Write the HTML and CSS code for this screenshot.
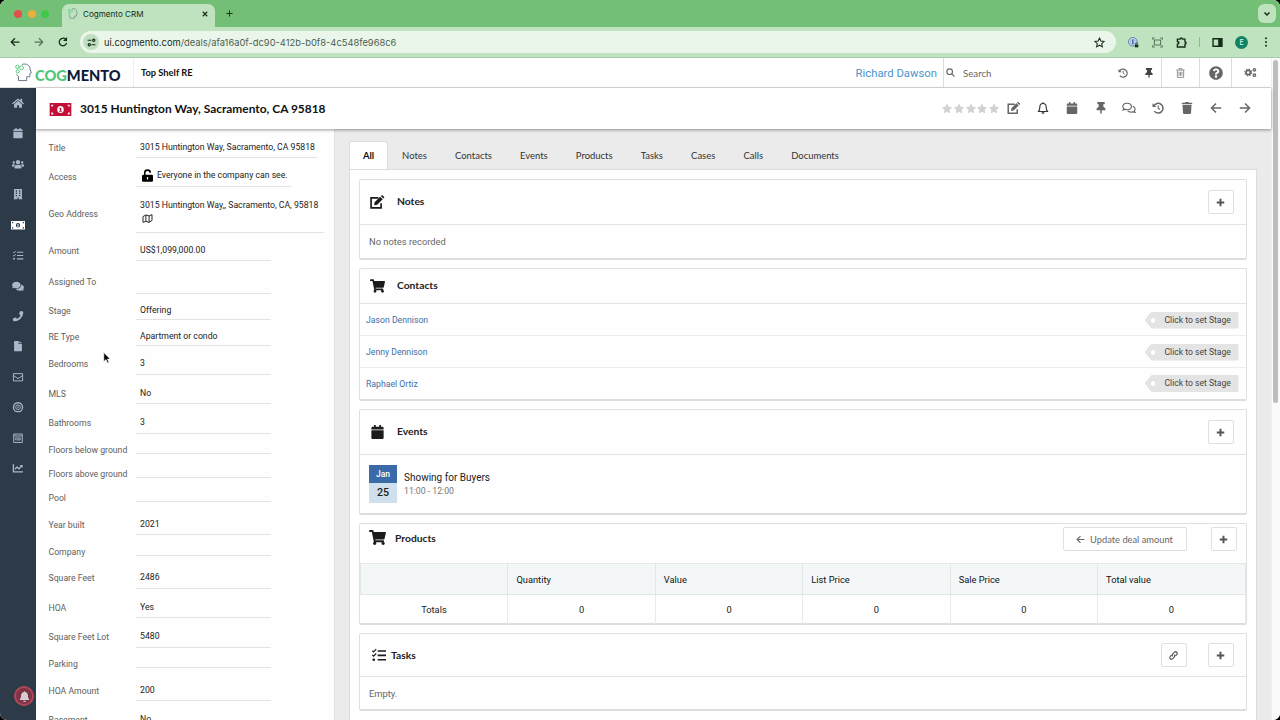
FILE: index.html
```html
<!DOCTYPE html>
<html lang="en">

<head>
    <meta charset="utf-8">
    <title>Cogmento CRM</title>
    <link rel="stylesheet" href="styles.css">
</head>

<body>
    <!-- icon set -->
    <svg class="sprite">
        <symbol id="home" viewBox="0 0 576 512"><path d="M280.37 148.26L96 300.11V464a16 16 0 0 0 16 16l112.06-.29a16 16 0 0 0 15.92-16V368a16 16 0 0 1 16-16h64a16 16 0 0 1 16 16v95.64a16 16 0 0 0 16 16.05L464 480a16 16 0 0 0 16-16V300L295.67 148.26a12.19 12.19 0 0 0-15.3 0zM571.6 251.47L488 182.56V44.05a12 12 0 0 0-12-12h-56a12 12 0 0 0-12 12v72.61L318.47 43a48 48 0 0 0-61 0L4.34 251.47a12 12 0 0 0-1.6 16.9l25.5 31A12 12 0 0 0 45.15 301l235.22-193.74a12.19 12.19 0 0 1 15.3 0L530.9 301a12 12 0 0 0 16.9-1.6l25.5-31a12 12 0 0 0-1.7-16.93z"/></symbol>
        <symbol id="calendar" viewBox="0 0 448 512"><path d="M12 192h424c6.600 0 12 5.400 12 12v260c0 26.500-21.500 48-48 48H48c-26.500 0-48-21.500-48-48V204c0-6.600 5.400-12 12-12zm436-44v-36c0-26.500-21.500-48-48-48h-48V12c0-6.600-5.400-12-12-12h-40c-6.600 0-12 5.400-12 12v52H160V12c0-6.600-5.400-12-12-12h-40c-6.600 0-12 5.400-12 12v52H48C21.500 64 0 85.500 0 112v36c0 6.600 5.400 12 12 12h424c6.600 0 12-5.400 12-12z"/></symbol>
        <symbol id="users" viewBox="0 0 640 512"><path d="M96 224c35.300 0 64-28.700 64-64s-28.700-64-64-64-64 28.700-64 64 28.700 64 64 64zm448 0c35.300 0 64-28.700 64-64s-28.700-64-64-64-64 28.700-64 64 28.700 64 64 64zm32 32h-64c-17.600 0-33.500 7.100-45.100 18.600 40.300 22.100 68.900 62 75.100 109.400h66c17.700 0 32-14.300 32-32v-32c0-35.300-28.700-64-64-64zm-256 0c61.900 0 112-50.100 112-112S381.900 32 320 32 208 82.100 208 144s50.100 112 112 112zm76.800 32h-8.300c-20.800 10-43.900 16-68.500 16s-47.600-6-68.500-16h-8.300C179.600 288 128 339.600 128 403.200V432c0 26.500 21.500 48 48 48h288c26.500 0 48-21.500 48-48v-28.800c0-63.600-51.600-115.200-115.200-115.200zm-223.700-13.400C161.500 263.100 145.600 256 128 256H64c-35.300 0-64 28.700-64 64v32c0 17.700 14.300 32 32 32h65.900c6.300-47.400 34.900-87.300 75.200-109.400z"/></symbol>
        <symbol id="building" viewBox="0 0 14 16"><path fill-rule="evenodd" d="M1 0h12v15h1v1H8v-3H6v3H0v-1h1zM3.500 2v2h2V2zm5 0v2h2V2zm-5 3.500v2h2v-2zm5 0v2h2v-2zm-5 3.500v2h2V9zm5 0v2h2V9z"/></symbol>
        <symbol id="money" viewBox="0 0 20 12"><path fill-rule="evenodd" d="M0 0h20v12H0zM1.500 1.500v2a2 2 0 0 0 2-2zm15 0a2 2 0 0 0 2 2v-2zm-15 9h2a2 2 0 0 0-2-2zm15 0h2v-2a2 2 0 0 0-2 2zM10 2.700a3 3.300 0 1 0 0 6.600 3 3.300 0 0 0 0-6.600z"/><path d="M9.200 4.300h1.500v3h.6v.8H8.700v-.8h.7V5.200h-.6z"/></symbol>
        <symbol id="tasks" viewBox="0 0 16 16"><path d="M6.500 2.500H16v1.800H6.500zm0 5H16v1.800H6.500zm0 5H16v1.800H6.500z"/><circle cx="2" cy="13.400" r="1.500"/><path fill="none" stroke="currentColor" stroke-width="1.400" d="M.4 3l1.400 1.400L4.800 1.300M.4 8l1.400 1.400L4.800 6.300"/></symbol>
        <symbol id="comments" viewBox="0 0 576 512"><path d="M416 192c0-88.400-93.100-160-208-160S0 103.600 0 192c0 34.300 14.100 65.900 38 92-13.400 30.200-35.500 54.200-35.800 54.500-2.200 2.300-2.800 5.700-1.500 8.700S4.800 352 8 352c36.600 0 66.900-12.300 88.700-25 32.200 15.700 70.300 25 111.300 25 114.900 0 208-71.600 208-160zm122 220c23.900-26 38-57.700 38-92 0-66.900-53.500-124.200-129.300-148.100.9 6.600 1.300 13.300 1.300 20.100 0 105.900-107.700 192-240 192-10.800 0-21.300-.8-31.700-1.900C207.800 439.600 281.800 480 368 480c41 0 79.100-9.200 111.300-25 21.800 12.700 52.100 25 88.700 25 3.200 0 6.100-1.900 7.300-4.800 1.300-2.900.7-6.300-1.500-8.700-.3-.3-22.400-24.200-35.800-54.500z"/></symbol>
        <symbol id="comments-o" viewBox="0 0 18 16"><path class="line thick" d="M6.500 1.700c3.200 0 5.700 1.900 5.700 4.300s-2.500 4.300-5.700 4.300c-1 0-2-.2-2.800-.6-.8.500-1.600.8-2.600.9.500-.6.800-1.200 1-1.900C1.300 8 .8 7 .8 6c0-2.400 2.500-4.300 5.700-4.300zM14 5.600c1.900.6 3.200 2 3.200 3.700 0 1-.4 1.900-1.200 2.600.2.700.6 1.300 1 1.900-1 0-1.900-.4-2.700-.9-.8.400-1.700.6-2.700.6-1.800 0-3.400-.6-4.400-1.600"/></symbol>
        <symbol id="phone" viewBox="0 0 512 512"><path d="M493.400 24.600l-104-24c-11.300-2.600-22.900 3.300-27.500 13.900l-48 112c-4.200 9.800-1.400 21.300 6.900 28l60.600 49.600c-36 76.700-98.900 140.500-177.200 177.200l-49.600-60.600c-6.800-8.300-18.200-11.100-28-6.900l-112 48C3.900 366.500-2 378.100.6 389.400l24 104C27.100 504.200 36.700 512 48 512c256.100 0 464-207.500 464-464 0-11.200-7.700-20.900-18.600-23.400z"/></symbol>
        <symbol id="file" viewBox="0 0 12 16"><path d="M1 0h6v4.500h5V15a1 1 0 0 1-1 1H1a1 1 0 0 1-1-1V1a1 1 0 0 1 1-1zm7 0l4 3.500H8z"/></symbol>
        <symbol id="mail" viewBox="0 0 16 16"><path class="line thick" d="M1 2.500h14v11H1zM1 5.500L8 10l7-4.500"/></symbol>
        <symbol id="target" viewBox="0 0 16 16"><circle class="line heavy" cx="8" cy="8" r="6.900"/><circle class="line thick" cx="8" cy="8" r="3.500"/><circle cx="8" cy="8" r="1.200"/></symbol>
        <symbol id="form" viewBox="0 0 16 16"><path class="line thick" d="M1.500 1.500h13v13h-13zM2 4.500h12"/><path class="line" d="M4 7.500h8v3H4zM6.700 7v3M9.500 7v5"/></symbol>
        <symbol id="chart" viewBox="0 0 16 16"><path class="line heavy" d="M1 2v11.500h14.500M3.500 9.500L6.500 6l3 3 4-4.500"/><path d="M10.500 3H15v4.500z"/></symbol>
        <symbol id="bell" viewBox="0 0 16 16"><path d="M8 .5a1 1 0 0 1 1 1c2.400.5 4 2.400 4 5 0 3.300.8 4.200 1.600 5.200.5.700.1 1.500-.7 1.500H2.100c-.8 0-1.200-.8-.7-1.500C2.200 10.700 3 9.800 3 6.500c0-2.600 1.600-4.500 4-5a1 1 0 0 1 1-1zM6 14h4a2 2 0 0 1-4 0z"/></symbol>
        <symbol id="bell-o" viewBox="0 0 16 16"><path class="line thick" d="M8 2c2.600 0 4.200 2 4.200 4.500 0 3.400.7 4.700 1.800 6.200H2c1.100-1.500 1.800-2.800 1.800-6.200C3.800 4 5.400 2 8 2z"/><path d="M7.200.3h1.600V2H7.200zM6 13.500h4a2 2 0 0 1-4 0z"/></symbol>
        <symbol id="edit" viewBox="0 0 18 16"><path class="line heavy" d="M10 3H1.300v12h12V9.500"/><path d="M5.500 8.300l6.700-6.700 3.100 3.100-6.700 6.700-3.600.6zM13 .9l.7-.6a1 1 0 0 1 1.500 0L16.700 1.800a1 1 0 0 1 0 1.500l-.7.6z"/></symbol>
        <symbol id="pin" viewBox="0 0 384 512"><path d="M298 214L286 96h42c13 0 24-11 24-24V24c0-13-11-24-24-24H56C43 0 32 11 32 24v48c0 13 11 24 24 24h42L86 214C37 237 0 277 0 328c0 13 11 24 24 24h136v104l25 52c3 6 11 6 14 0l25-52V352h136c13 0 24-11 24-24 0-51-38-91-86-114z"/></symbol>
        <symbol id="history" viewBox="0 0 16 16"><path class="line heavy" d="M2.500 5A6.500 6.500 0 1 1 3 12.200"/><path class="line thick" d="M8.300 4.500V8.300l2.300 1.700"/><path d="M.7 1.500v5.200h5.200z"/></symbol>
        <symbol id="trash" viewBox="0 0 448 512"><path d="M432 32H312l-9.400-18.700A24 24 0 0 0 281.100 0H166.800a23.720 23.720 0 0 0-21.400 13.300L136 32H16A16 16 0 0 0 0 48v32a16 16 0 0 0 16 16h416a16 16 0 0 0 16-16V48a16 16 0 0 0-16-16zM53.200 467a48 48 0 0 0 47.900 45h245.800a48 48 0 0 0 47.900-45L416 128H32z"/></symbol>
        <symbol id="trash-o" viewBox="0 0 14 16"><path class="line" d="M.5 3.300h13M4.500 3V1h5v2M2 3.500V15h10V3.500M4.700 6v6.500M7 6v6.500M9.300 6v6.500"/></symbol>
        <symbol id="left" viewBox="0 0 16 16"><path class="line heavy" d="M15 8H2.500M8 2L2 8l6 6"/></symbol>
        <symbol id="right" viewBox="0 0 16 16"><path class="line heavy" d="M1 8h12.500M8 2l6 6-6 6"/></symbol>
        <symbol id="cart" viewBox="0 0 576 512"><path d="M528.120 301.319l47.273-208C578.806 78.301 567.391 64 551.990 64H159.208l-9.166-44.810C147.758 8.021 137.930 0 126.529 0H24C10.745 0 0 10.745 0 24v16c0 13.255 10.745 24 24 24h69.883l70.248 343.435C147.325 417.100 136 435.222 136 456c0 30.928 25.072 56 56 56s56-25.072 56-56c0-15.674-6.447-29.835-16.824-40h209.647C430.447 426.165 424 440.326 424 456c0 30.928 25.072 56 56 56s56-25.072 56-56c0-22.172-12.888-41.332-31.579-50.405l5.517-24.276c3.413-15.018-8.002-29.319-23.403-29.319H218.117l-6.545-32h293.145c11.206 0 20.920-7.754 23.403-18.681z"/></symbol>
        <symbol id="star" viewBox="0 0 576 512"><path d="M259.300 17.800L194 150.200 47.900 171.500c-26.200 3.800-36.700 36.100-17.700 54.600l105.700 103-25 145.500c-4.500 26.300 23.200 46 46.400 33.700L288 439.600l130.700 68.700c23.200 12.200 50.900-7.400 46.400-33.700l-25-145.500 105.700-103c19-18.500 8.500-50.800-17.700-54.600L382 150.200 316.700 17.800c-11.700-23.600-45.600-23.900-57.400 0z"/></symbol>
        <symbol id="star-o" viewBox="0 0 16 16"><path class="line thick" d="M8 1.500l2 4.400 4.800.5-3.600 3.200 1 4.700L8 11.900l-4.200 2.400 1-4.700L1.200 6.400 6 5.900z"/></symbol>
        <symbol id="help" viewBox="0 0 512 512"><path d="M504 256c0 136.997-111.043 248-248 248S8 392.997 8 256C8 119.083 119.043 8 256 8s248 111.083 248 248zM262.655 90c-54.497 0-89.255 22.957-116.549 63.758-3.536 5.286-2.353 12.415 2.715 16.258l34.699 26.310c5.205 3.947 12.621 3.008 16.665-2.122 17.864-22.658 30.113-35.797 57.303-35.797 20.429 0 45.698 13.148 45.698 32.958 0 14.976-12.363 22.667-32.534 33.976C247.128 238.528 216 254.941 216 296v4c0 6.627 5.373 12 12 12h56c6.627 0 12-5.373 12-12v-1.333c0-28.462 83.186-29.647 83.186-106.667 0-58.002-60.165-102-116.531-102zM256 338c-25.365 0-46 20.635-46 46 0 25.364 20.635 46 46 46s46-20.636 46-46c0-25.365-20.635-46-46-46z"/></symbol>
        <symbol id="cogs" viewBox="0 0 20 16"><circle cx="6.500" cy="8" r="3.300" fill="none" stroke="currentColor" stroke-width="2.600"/><circle cx="6.500" cy="8" r="5.200" fill="none" stroke="currentColor" stroke-width="1.800" stroke-dasharray="2.300 1.780"/><circle class="line heavy" cx="16" cy="3.800" r="1.900"/><circle class="line heavy" cx="16" cy="12.200" r="1.900"/></symbol>
        <symbol id="search" viewBox="0 0 16 16"><circle class="line heavy" cx="6.500" cy="6.500" r="5"/><path class="line heavy" d="M10.200 10.200l5 5"/></symbol>
        <symbol id="lock-open" viewBox="0 0 14 16"><path class="line heavy" d="M3.500 8V4.600C3.500 2.500 5 1.200 7 1.200s3.500 1.300 3.500 3.400"/><path fill-rule="evenodd" d="M1.500 7h11A1.500 1.500 0 0 1 14 8.500v6a1.500 1.500 0 0 1-1.500 1.500h-11A1.500 1.500 0 0 1 0 14.500v-6A1.500 1.500 0 0 1 1.500 7zm4.700 2.800v3.400h1.600V9.800z"/></symbol>
        <symbol id="map" viewBox="0 0 16 14"><path class="line thick" d="M1 4l4.500-2.500 5 1.500L15 1v9l-4.500 3-5-1.500L1 13zM5.500 1.500v10M10.500 3v10"/></symbol>
        <symbol id="plus" viewBox="0 0 12 12"><path d="M4.700 1h2.600v3.700H11v2.600H7.300V11H4.700V7.300H1V4.700h3.700z"/></symbol>
        <symbol id="link" viewBox="0 0 16 16"><path class="line heavy" d="M6.700 9.500a3 3 0 0 1 0-4.200l2.700-3a3 3 0 0 1 4.300 4.200l-2 2.100M9.300 6.500a3 3 0 0 1 0 4.200l-2.700 3a3 3 0 0 1-4.300-4.200l2-2.100"/></symbol>
        <symbol id="reload" viewBox="0 0 16 16"><path class="line heavy" d="M13.800 9.500A6 6 0 1 1 12.200 3.700"/><path d="M14.500 0v6.500H8z"/></symbol>
        <symbol id="tune" viewBox="0 0 16 16"><path class="line heavy" d="M1 4h7M8 12h7"/><circle class="line heavy" cx="12" cy="4" r="2"/><circle class="line heavy" cx="4" cy="12" r="2"/></symbol>
        <symbol id="capture" viewBox="0 0 16 16"><path class="line thick" d="M3.500 4.500h9v7h-9zM1 4V1.500h3M12 1.500h3V4M1 12v2.500h3M12 14.500h3V12"/></symbol>
        <symbol id="puzzle" viewBox="0 0 16 16"><path class="line heavy" d="M2 3h4a1.700 1.700 0 0 1 3.400 0H13v4a1.700 1.700 0 0 1 0 3.400V14.500H2v-4c3 0 3-4 0-4z"/></symbol>
        <symbol id="panel" viewBox="0 0 16 16"><path class="line heavy" d="M1.500 2.500h13v11h-13z"/><path d="M9 2.500h5.500v11H9z"/></symbol>
        <symbol id="onepass" viewBox="0 0 16 16"><circle cx="7" cy="7" r="6.200" fill="#d5e5f5" stroke="#466fad" stroke-width="1.300"/><circle cx="7" cy="7" r="3.700" fill="none" stroke="#7898c5"/><path fill="#365b9b" d="M6 4h2v6H6z"/><path fill="#163316" d="M10 11h5v4h-5z"/><path d="M11 11v-1a1.500 1.500 0 0 1 3 0v1" fill="none" stroke="#163316"/></symbol>
        <symbol id="head" viewBox="0 0 18 20"><path fill="none" stroke="#56626f" stroke-width=".9" d="M8 1.500c4.500-1.400 8.500 1 8.500 5l1.200 4-1.500.6v3.400h-3.300v4H4.200v-4.600L2 12"/><circle cx="3" cy="4" r="1.700" fill="none" stroke="#51c678"/><circle cx="7.500" cy="5" r="2" fill="none" stroke="#51c678"/><circle cx="3.500" cy="8.800" r="1.700" fill="none" stroke="#51c678"/></symbol>
    </svg>

    <div class="browser">
        <div class="tab-strip">
            <div class="lights"><i class="red"></i><i class="yellow"></i><i class="green"></i></div>
            <div class="browser-tab">
                <svg class="favicon"><use href="#head"/></svg>
                <span>Cogmento CRM</span>
                <svg class="tab-close" viewBox="0 0 8 8"><path class="line thick" d="M1 1l6 6M7 1L1 7"/></svg>
            </div>
            <svg class="new-tab" viewBox="0 0 8 8"><path class="line" d="M4 .5v7M.5 4h7"/></svg>
            <div class="tab-menu"><svg viewBox="0 0 8 8"><path class="line thick" d="M1.500 2.500L4 5l2.500-2.500"/></svg></div>
        </div>
        <div class="toolbar">
            <svg class="nav"><use href="#left"/></svg>
            <svg class="nav dim"><use href="#right"/></svg>
            <svg class="nav"><use href="#reload"/></svg>
            <div class="url-bar">
                <span class="site-info"><svg><use href="#tune"/></svg></span>
                <span class="url">ui.cogmento.com<em>/deals/afa16a0f-dc90-412b-b0f8-4c548fe968c6</em></span>
                <svg class="bookmark"><use href="#star-o"/></svg>
            </div>
            <div class="extensions">
                <svg><use href="#onepass"/></svg>
                <svg class="dim"><use href="#capture"/></svg>
                <svg><use href="#puzzle"/></svg>
                <i></i>
                <svg><use href="#panel"/></svg>
                <b>E</b>
                <svg class="dots" viewBox="0 0 4 16"><circle cx="2" cy="3" r="1.300"/><circle cx="2" cy="8" r="1.300"/><circle cx="2" cy="13" r="1.300"/></svg>
            </div>
        </div>
    </div>

    <div class="app">
        <div class="page">
            <header class="topbar">
                <div class="logo"><svg><use href="#head"/></svg><span><b>COG</b>MENTO</span></div>
                <div class="company">Top Shelf RE</div>
                <a class="user">Richard Dawson</a>
                <div class="search">
                    <svg><use href="#search"/></svg>
                    <span>Search</span>
                    <svg class="recent"><use href="#history"/></svg>
                    <svg class="pinned"><use href="#pin"/></svg>
                </div>
                <div class="top-btn bin"><svg><use href="#trash-o"/></svg></div>
                <div class="top-btn help"><svg><use href="#help"/></svg></div>
                <div class="top-btn cogs"><svg><use href="#cogs"/></svg></div>
            </header>

            <div class="body">
                <nav class="sidebar">
                    <a><svg><use href="#home"/></svg></a>
                    <a><svg><use href="#calendar"/></svg></a>
                    <a><svg><use href="#users"/></svg></a>
                    <a><svg><use href="#building"/></svg></a>
                    <a class="active"><svg><use href="#money"/></svg></a>
                    <a><svg><use href="#tasks"/></svg></a>
                    <a><svg><use href="#comments"/></svg></a>
                    <a><svg><use href="#phone"/></svg></a>
                    <a><svg><use href="#file"/></svg></a>
                    <a><svg><use href="#mail"/></svg></a>
                    <a><svg><use href="#target"/></svg></a>
                    <a><svg><use href="#form"/></svg></a>
                    <a><svg><use href="#chart"/></svg></a>
                    <div class="alert"><svg><use href="#bell"/></svg></div>
                </nav>

                <div class="deal">
                    <div class="deal-header">
                        <svg class="deal-icon"><use href="#money"/></svg>
                        <h1>3015 Huntington Way, Sacramento, CA 95818</h1>
                        <div class="stars">
                            <svg><use href="#star"/></svg><svg><use href="#star"/></svg><svg><use href="#star"/></svg><svg><use href="#star"/></svg><svg><use href="#star"/></svg>
                        </div>
                        <div class="actions">
                            <svg><use href="#edit"/></svg>
                            <svg class="dark"><use href="#bell-o"/></svg>
                            <svg><use href="#calendar"/></svg>
                            <svg><use href="#pin"/></svg>
                            <svg><use href="#comments-o"/></svg>
                            <svg><use href="#history"/></svg>
                            <svg><use href="#trash"/></svg>
                            <svg><use href="#left"/></svg>
                            <svg><use href="#right"/></svg>
                        </div>
                    </div>

                    <div class="columns">
                        <div class="fields">
                            <div class="field"><label>Title</label><p class="w-title">3015 Huntington Way, Sacramento, CA 95818</p></div>
                            <div class="field access"><label>Access</label><p class="w-access"><svg><use href="#lock-open"/></svg>Everyone in the company can see.</p></div>
                            <div class="field geo"><label>Geo Address</label><p class="w-geo">3015 Huntington Way,, Sacramento, CA, 95818<br><svg><use href="#map"/></svg></p></div>
                            <div class="field amount"><label>Amount</label><p>US$1,099,000.00</p></div>
                            <div class="field assigned"><label>Assigned To</label><p></p></div>
                            <div class="field short"><label>Stage</label><p>Offering</p></div>
                            <div class="field short"><label>RE Type</label><p>Apartment or condo</p></div>
                            <div class="field"><label>Bedrooms</label><p>3</p></div>
                            <div class="field"><label>MLS</label><p>No</p></div>
                            <div class="field"><label>Bathrooms</label><p>3</p></div>
                            <div class="field empty"><label>Floors below ground</label><p></p></div>
                            <div class="field empty"><label>Floors above ground</label><p></p></div>
                            <div class="field empty"><label>Pool</label><p></p></div>
                            <div class="field"><label>Year built</label><p>2021</p></div>
                            <div class="field empty"><label>Company</label><p></p></div>
                            <div class="field"><label>Square Feet</label><p>2486</p></div>
                            <div class="field"><label>HOA</label><p>Yes</p></div>
                            <div class="field"><label>Square Feet Lot</label><p>5480</p></div>
                            <div class="field empty"><label>Parking</label><p></p></div>
                            <div class="field"><label>HOA Amount</label><p>200</p></div>
                            <div class="field"><label>Basement</label><p>No</p></div>
                        </div>

                        <div class="main">
                            <div class="tabs">
                                <a class="current">All</a><a>Notes</a><a>Contacts</a><a>Events</a><a>Products</a><a>Tasks</a><a>Cases</a><a>Calls</a><a>Documents</a>
                            </div>
                            <div class="panel">
                                <section class="card">
                                    <div class="card-head">
                                        <svg><use href="#edit"/></svg>
                                        <h2>Notes</h2>
                                        <button><svg><use href="#plus"/></svg></button>
                                    </div>
                                    <div class="card-text">No notes recorded</div>
                                </section>

                                <section class="card contacts">
                                    <div class="card-head">
                                        <svg><use href="#cart"/></svg>
                                        <h2>Contacts</h2>
                                    </div>
                                    <div class="contact"><a>Jason Dennison</a><span class="stage">Click to set Stage</span></div>
                                    <div class="contact"><a>Jenny Dennison</a><span class="stage">Click to set Stage</span></div>
                                    <div class="contact"><a>Raphael Ortiz</a><span class="stage">Click to set Stage</span></div>
                                </section>

                                <section class="card events">
                                    <div class="card-head">
                                        <svg><use href="#calendar"/></svg>
                                        <h2>Events</h2>
                                        <button><svg><use href="#plus"/></svg></button>
                                    </div>
                                    <div class="event">
                                        <div class="date"><span>Jan</span><b>25</b></div>
                                        <div class="event-info">Showing for Buyers<small>11:00 - 12:00</small></div>
                                    </div>
                                </section>

                                <section class="card products">
                                    <div class="card-head">
                                        <svg><use href="#cart"/></svg>
                                        <h2>Products</h2>
                                        <button class="update"><svg><use href="#left"/></svg>Update deal amount</button>
                                        <button><svg><use href="#plus"/></svg></button>
                                    </div>
                                    <table>
                                        <tr><th></th><th>Quantity</th><th>Value</th><th>List Price</th><th>Sale Price</th><th>Total value</th></tr>
                                        <tr><td>Totals</td><td>0</td><td>0</td><td>0</td><td>0</td><td>0</td></tr>
                                    </table>
                                </section>

                                <section class="card tasks">
                                    <div class="card-head">
                                        <svg><use href="#tasks"/></svg>
                                        <h2>Tasks</h2>
                                        <button class="attach"><svg><use href="#link"/></svg></button>
                                        <button><svg><use href="#plus"/></svg></button>
                                    </div>
                                    <div class="card-text">Empty.</div>
                                </section>
                            </div>
                        </div>
                    </div>
                </div>
            </div>
        </div>
        <div class="scrollbar"><i></i></div>
    </div>

    <svg class="cursor" viewBox="0 0 8 12"><path d="M.8.600v9L3 7.600l1.500 3.500 1.400-.6L4.400 7.100h2.800z" fill="#000" stroke="#fff" stroke-width=".6"/></svg>
</body>

</html>
```
FILE: styles.css
```css
* {
    box-sizing: border-box;
}

html {
    background: #000;
}

body {
    margin: 0;
    width: 1280px;
    height: 720px;
    overflow: hidden;
    border-radius: 7px;
    display: flex;
    flex-direction: column;
    background: #fefefe;
    color: #222;
    font-family: Roboto, sans-serif;
    font-size: 8.7px;
}

svg {
    fill: currentColor;
    flex: none;
    display: block;
}

.sprite {
    position: absolute;
    width: 0;
    height: 0;
}

.line {
    fill: none;
    stroke: currentColor;
    stroke-width: 1.1;
}

.thick {
    stroke-width: 1.5;
}

.heavy {
    stroke-width: 2;
}

h1, h2, p {
    margin: 0;
}

/* browser window */
.browser {
    height: 58px;
    flex: none;
    background: #bfe3be;
    border-bottom: 1px solid #a9c9a8;
    font-family: Inter, sans-serif;
    color: #172b18;
}

.tab-strip {
    height: 27px;
    background: #72bf75;
    display: flex;
    align-items: center;
    padding: 0 4px 0 14px;
}

.lights {
    display: flex;
    gap: 5.5px;
    width: 48px;
}

.lights i {
    width: 8px;
    height: 8px;
    border-radius: 50%;
}

.red { background: #e2504c; }
.yellow { background: #e9b13c; }
.green { background: #41c74a; }

.browser-tab {
    width: 153px;
    height: 23px;
    margin-top: 4px;
    border-radius: 7px 7px 0 0;
    background: #bfe3be;
    display: flex;
    align-items: center;
    padding: 0 7px 4px 5px;
    font-size: 8.1px;
}

.favicon {
    width: 11px;
    height: 11px;
    margin-right: 5px;
}

.tab-close {
    width: 6px;
    height: 6px;
    margin-left: auto;
}

.new-tab {
    width: 7px;
    height: 7px;
    margin-left: 11px;
}

.tab-menu {
    width: 18px;
    height: 19px;
    margin-left: auto;
    border-radius: 6px;
    background: #bfe3be;
    display: grid;
    place-items: center;
}

.tab-menu svg {
    width: 8px;
    height: 8px;
}

.toolbar {
    height: 30px;
    display: flex;
    align-items: center;
    padding: 0 12px 0 10px;
}

.nav {
    width: 10px;
    height: 10px;
    margin-right: 14px;
}

.dim {
    opacity: .6;
}

.url-bar {
    flex: none;
    width: 1036px;
    height: 22px;
    margin-left: -2px;
    border-radius: 11px;
    background: #ebf6eb;
    display: flex;
    align-items: center;
    padding: 0 11px 0 3px;
}

.site-info {
    width: 16px;
    height: 16px;
    border-radius: 50%;
    background: #bfdfc0;
    display: grid;
    place-items: center;
    margin-right: 5px;
}

.site-info svg {
    width: 9px;
    height: 9px;
}

.url {
    font-size: 9.35px;
}

.url em {
    font-style: normal;
    color: #4c5e4d;
}

.bookmark {
    width: 11px;
    height: 11px;
    margin-left: auto;
}

.extensions {
    flex: 1;
    display: flex;
    justify-content: flex-end;
    align-items: center;
    gap: 13px;
}

.extensions svg {
    width: 11px;
    height: 11px;
}

.extensions i {
    width: 1px;
    height: 10px;
    background: #8db98e;
    margin: 0 -1px;
}

.extensions b {
    width: 13px;
    height: 13px;
    margin-left: -1px;
    border-radius: 50%;
    background: #128267;
    color: #d9f2e0;
    font-size: 7px;
    font-weight: 500;
    display: grid;
    place-items: center;
}

.extensions .dots {
    width: 4px;
    height: 12px;
    margin-left: 3px;
}

/* app */
.app {
    flex: 1;
    min-height: 0;
    display: flex;
}

.page {
    width: 1271px;
    display: flex;
    flex-direction: column;
}

.scrollbar {
    flex: 1;
    background: #fafafa;
    border-left: 1px solid #eee;
    padding: 2px 2px 0 1px;
}

.scrollbar i {
    display: block;
    height: 343px;
    border-radius: 3px;
    background: #bdbdbd;
}

.topbar {
    height: 30px;
    flex: none;
    display: flex;
    align-items: center;
    border-bottom: 1px solid #ddd;
    background: #fff;
}

.topbar > div {
    height: 100%;
    display: flex;
    align-items: center;
}

.logo {
    width: 134px;
    border-right: 1px solid #eee;
    padding-left: 14px;
    font-family: Lato, sans-serif;
    font-weight: 900;
    font-size: 14.6px;
    color: #0e1b37;
}

.logo svg {
    width: 18px;
    height: 19px;
    margin: 0 3px 0 0;
}

.logo span {
    padding-top: 5px;
}

.logo b {
    color: #50c77a;
    font-weight: 900;
}

.company {
    padding-left: 7px;
    font-family: Lato, sans-serif;
    font-weight: bold;
    font-size: 9.3px;
    color: #111;
}

.user {
    margin-left: auto;
    padding: 1px 6px 0 0;
    font-size: 11.3px;
    color: #4e93cd;
}

.search {
    width: 218px;
    border-left: 1px solid #ddd;
    padding-left: 2px;
    font-family: Lato, sans-serif;
    font-size: 9.7px;
    color: #666;
}

.search svg {
    width: 9px;
    height: 9px;
    margin-right: 8px;
}

.search .recent {
    width: 10px;
    height: 10px;
    margin: 0 17px 0 auto;
}

.search .pinned {
    width: 8px;
    height: 10px;
    margin-right: 8px;
    color: #444;
}

.topbar > .top-btn {
    border-left: 1px solid #ddd;
    justify-content: center;
    color: #666;
}

.bin { width: 38px; }
.help { width: 32px; }
.cogs { width: 40px; padding-right: 2px; }

.bin svg { width: 9px; height: 10px; }
.help svg { width: 14px; height: 14px; }
.cogs svg { width: 13px; height: 11px; }

.body {
    flex: 1;
    min-height: 0;
    display: flex;
}

.sidebar {
    width: 35.5px;
    flex: none;
    background: #2d3b49;
    color: #a9b9c9;
    position: relative;
}

.sidebar a {
    height: 30.45px;
    display: grid;
    place-items: center;
}

.sidebar svg {
    width: 12px;
    height: 10.5px;
    margin-left: 1px;
}

.sidebar .active {
    color: #fff;
}

.sidebar .active svg {
    width: 14px;
}

.alert {
    position: absolute;
    left: 14px;
    bottom: 14px;
    width: 20px;
    height: 20px;
    border-radius: 50%;
    background: #7d3546;
    border: 2px solid #b44458;
    color: #d8cdd0;
    display: grid;
    place-items: center;
}

.sidebar .alert svg {
    width: 11px;
    height: 11px;
    margin: 0;
}

.deal {
    flex: 1;
    min-width: 0;
    display: flex;
    flex-direction: column;
}

.deal-header {
    height: 41px;
    flex: none;
    display: flex;
    align-items: center;
    padding: 0 19px 1px 13.5px;
    background: #fff;
    position: relative;
    box-shadow: 0 1px 3px rgba(0, 0, 0, .4);
}

.deal-icon {
    width: 23px;
    height: 13px;
    margin: 2px 8px 0 0;
    color: #c30f35;
}

h1 {
    font-family: Lato, sans-serif;
    font-size: 11.93px;
    font-weight: bold;
    color: #111;
}

.stars {
    margin-left: auto;
    display: flex;
    gap: 1.7px;
    color: #d2d2d2;
}

.stars svg {
    width: 10px;
    height: 9px;
}

.actions {
    display: flex;
    gap: 14.9px;
    margin-left: 8px;
    color: #666;
}

.actions svg {
    width: 14px;
    height: 12px;
}

.actions .dark {
    color: #333;
}

.columns {
    flex: 1;
    min-height: 0;
    display: flex;
    background: #ebebeb;
}

.fields {
    width: 299px;
    flex: none;
    padding: 4px 0 0 13px;
    background: #fefefe;
    overflow: hidden;
    border-right: 1px solid #e2e2e2;
}

.field {
    height: 29.35px;
    display: flex;
}

.field label {
    width: 87.5px;
    align-self: center;
    white-space: nowrap;
    color: #606060;
}

.field p {
    width: 135px;
    margin-bottom: 4px;
    padding: 3px 0 0 4px;
    border-bottom: 1px solid #e3e3e3;
    display: flex;
    align-items: center;
    white-space: nowrap;
}

.empty { height: 24.2px; }
.field.empty p { margin-bottom: 8px; }
.short { height: 25.6px; }
.access { height: 28.4px; }
.geo { height: 46px; }
.amount { height: 28px; }
.assigned { height: 33.6px; }

.field .w-title { width: 181px; }

.field .w-access {
    width: 155px;
    padding-left: 6px;
    padding-top: 2px;
}

.w-access svg {
    width: 11px;
    height: 13px;
    margin-right: 4px;
    color: #000;
}

.field .w-geo {
    width: 188px;
    display: block;
    padding-top: 7.5px;
    line-height: 14px;
}

.w-geo svg {
    width: 11px;
    height: 9px;
    margin: 2px 0 0 2px;
}

.main {
    flex: 1;
    padding: 12px 14.5px 0 14.5px;
}

.tabs {
    display: flex;
    height: 28px;
    font-family: Lato, sans-serif;
    font-size: 9.45px;
    color: #333;
}

.tabs a {
    padding: 9px 14.1px 0;
}

.tabs .current {
    width: 39px;
    padding: 8px 0 0;
    text-align: center;
    font-weight: bold;
    color: #111;
    background: #fff;
    border: 1px solid #ddd;
    border-bottom: 0;
    border-radius: 3px 3px 0 0;
}

.panel {
    height: 560px;
    background: #fff;
    border: 1px solid #dcdcdc;
    border-width: 1px 1px 0;
    padding: 9px 9px 0;
}

.card {
    height: 81px;
    margin-bottom: 8px;
    background: #fefefe;
    border: 1px solid #e0e0e0;
    border-bottom: 2px solid #ddd;
    border-radius: 2px;
}

.card-head {
    height: 45px;
    display: flex;
    align-items: center;
    padding: 0 12px 0 10px;
    border-bottom: 1px solid #e4e4e4;
}

.card-head > svg {
    width: 15px;
    height: 14px;
    color: #1b1b1b;
}

h2 {
    margin: 0 0 2px 12px;
    font-family: Lato, sans-serif;
    font-size: 10.3px;
    font-weight: bold;
    color: #222;
}

button {
    width: 26px;
    height: 24px;
    margin-left: auto;
    padding: 0;
    border: 1px solid #e0e0e0;
    border-radius: 2px;
    background: #fff;
    color: #555;
    display: flex;
    align-items: center;
    justify-content: center;
    font-family: Lato, sans-serif;
    font-size: 9.3px;
}

button svg {
    width: 9px;
    height: 9px;
}

.card-text {
    padding: 11px 9px;
    font-size: 9.35px;
    color: #666;
}

.contacts {
    height: 133px;
}

.contacts .card-head {
    height: 35px;
}

.contact {
    height: 32px;
    display: flex;
    align-items: center;
    justify-content: space-between;
    padding: 1px 7px 0 6px;
    border-bottom: 1px solid #ececec;
}

.contact:last-child {
    border-bottom: 0;
    height: 30px;
}

.contact a {
    color: #416fa6;
}

.stage {
    width: 94px;
    height: 17px;
    padding-left: 20px;
    line-height: 17px;
    font-size: 8.6px;
    color: #444;
    background: radial-gradient(circle at 8px 50%, #fff 2px, #e4e4e4 2.5px);
    border-radius: 2px;
    clip-path: polygon(0 50%, 7px 0, 100% 0, 100% 100%, 7px 100%);
}

.events {
    height: 106px;
}

.event {
    display: flex;
    padding: 10px 9px;
    gap: 7px;
}

.date {
    width: 28px;
    height: 38px;
    text-align: center;
    background: #cfdfeb;
}

.date span {
    display: block;
    height: 18px;
    line-height: 18px;
    background: #3a6aa7;
    color: #fff;
    font-weight: 500;
    font-size: 8.5px;
}

.date b {
    display: block;
    line-height: 20px;
    font-size: 10.7px;
    font-weight: 500;
}

.event-info {
    padding-top: 6px;
    font-size: 10px;
    line-height: 13px;
}

.event-info small {
    display: block;
    margin-top: 1px;
    font-size: 8.7px;
    color: #777;
}

.products {
    height: 102px;
}

.products .card-head {
    height: 39px;
    padding: 0 9px 9px;
    border: 0;
}

.products .card-head > svg {
    width: 17px;
    height: 15px;
    margin-bottom: 3px;
}

.products h2 {
    margin: 0 0 3px 9px;
}

.products .card-head button {
    margin: 0 0 0 24px;
}

.products .card-head .update {
    width: 124px;
    margin-left: auto;
    gap: 5px;
    color: #666;
}

table {
    width: 100%;
    table-layout: fixed;
    border-collapse: collapse;
    font-size: 9.3px;
}

th {
    height: 31px;
    padding: 0 0 0 8px;
    border: 1px solid #e3e7e8;
    background: #f4f7f8;
    text-align: left;
    font-weight: 400;
    color: #111;
}

td {
    height: 29px;
    padding: 0;
    border-right: 1px solid #eaeaea;
    text-align: center;
}

.tasks {
    height: 78px;
}

.tasks .card-head {
    height: 43px;
    padding-left: 12px;
}

.tasks .card-head > svg {
    width: 14px;
}

.tasks h2 {
    margin: 0 0 0 5px;
}

.tasks .card-head button {
    margin-left: 21px;
}

.tasks .card-head .attach {
    margin-left: auto;
}

.cursor {
    position: absolute;
    left: 103px;
    top: 352px;
    width: 8px;
    height: 12px;
}
```
